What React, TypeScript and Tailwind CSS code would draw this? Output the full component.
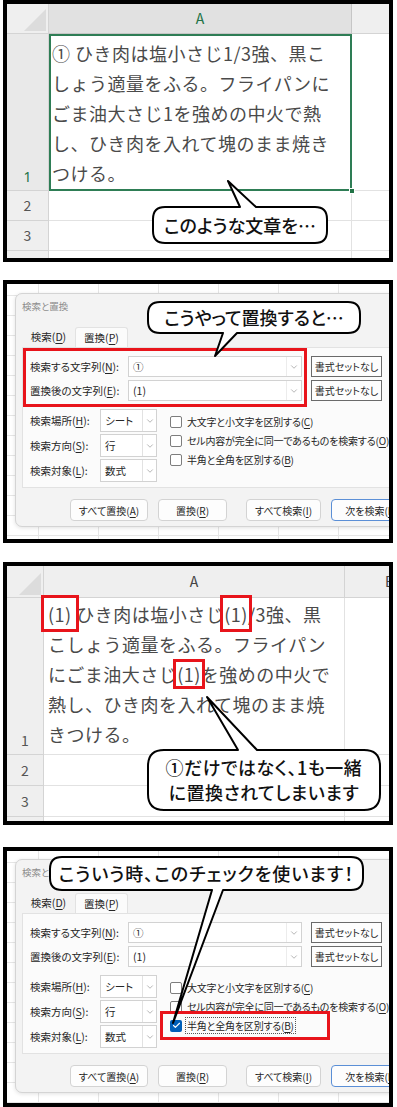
import React from "react";
import { Check, ChevronDown } from "lucide-react";

const JP = "font-['Noto_Sans_CJK_JP','Noto_Sans',sans-serif]";
const PALT = "[font-feature-settings:'palt']";

type Tail = { side: "top" | "bottom"; b1: number; b2: number; tx: number; ty: number };

// rounded box with a pointed tail, drawn in panel coordinates
function bubblePath(x: number, y: number, w: number, h: number, r: number, t: Tail) {
  const R = x + w;
  const B = y + h;
  if (t.side === "top") {
    return `M ${x + r} ${y} L ${t.b1} ${y} L ${t.tx} ${t.ty} L ${t.b2} ${y} L ${R - r} ${y} Q ${R} ${y} ${R} ${y + r} L ${R} ${B - r} Q ${R} ${B} ${R - r} ${B} L ${x + r} ${B} Q ${x} ${B} ${x} ${B - r} L ${x} ${y + r} Q ${x} ${y} ${x + r} ${y} Z`;
  }
  return `M ${x + r} ${y} L ${R - r} ${y} Q ${R} ${y} ${R} ${y + r} L ${R} ${B - r} Q ${R} ${B} ${R - r} ${B} L ${t.b2} ${B} L ${t.tx} ${t.ty} L ${t.b1} ${B} L ${x + r} ${B} Q ${x} ${B} ${x} ${B - r} L ${x} ${y + r} Q ${x} ${y} ${x + r} ${y} Z`;
}

const Callout = ({
  box,
  tail,
  className,
  children,
}: {
  box: [number, number, number, number, number];
  tail: Tail;
  className: string;
  children: React.ReactNode;
}) => {
  const [x, y, w, h, r] = box;
  return (
    <>
      <svg className="pointer-events-none absolute left-0 top-0 h-[256px] w-[382px] overflow-visible">
        <path d={bubblePath(x, y, w, h, r, tail)} fill="white" stroke="black" strokeWidth={2} strokeLinejoin="round" />
      </svg>
      <div
        className={`absolute flex flex-col items-center justify-center whitespace-nowrap font-medium leading-[25px] text-[#111] ${JP} ${PALT} ${className}`}
      >
        {children}
      </div>
    </>
  );
};

const Frame = ({ className, children }: { className: string; children: React.ReactNode }) => (
  <div className={`relative ml-[3px] w-[390px] overflow-hidden border-4 border-black bg-white ${className}`}>{children}</div>
);

const Corner = ({ w }: { w: string }) => (
  <div className={`relative h-full shrink-0 border-r border-b border-[#d4d4d4] bg-[#efefef] ${w}`}>
    <div className="absolute bottom-[2px] right-[2px] h-0 w-0 border-b-[22px] border-l-[22px] border-b-[#dcdcdc] border-l-transparent" />
  </div>
);

const Underline = ({ c }: { c: string }) => <span className="underline underline-offset-2">{c}</span>;

/* ---------- sheet 1 ---------- */
const lines1 = [
  "① ひき肉は塩小さじ1/3強、黒こ",
  "しょう適量をふる。フライパンに",
  "ごま油大さじ1を強めの中火で熱",
  "し、ひき肉を入れて塊のまま焼き",
  "つける。",
];

const SheetOne = () => (
  <Frame className="h-[262px]">
    <div className={`flex h-[30px] ${JP}`}>
      <Corner w="w-[42px]" />
      <div className="flex w-[303px] shrink-0 items-center justify-center border-r border-b border-[#c6c6c6] bg-[#e1e1e1] text-[14px] text-[#217346]">
        A
      </div>
      <div className="flex-1 border-b border-[#d4d4d4] bg-[#efefef]" />
    </div>
    <div className="flex h-[157px]">
      <div className="flex w-[42px] shrink-0 items-end justify-center border-r border-b border-[#d4d4d4] bg-[#e9e9e9] pb-[3px] text-[14px] text-[#217346]">
        1
      </div>
      <div className="relative w-[303px] shrink-0 pl-[3px] pt-[4px]">
        <div className={`text-[18px] leading-[30px] tracking-[0.5px] text-[#4a4a4a] ${JP}`}>
          {lines1.map((l) => (
            <div key={l} className="whitespace-nowrap">
              {l}
            </div>
          ))}
        </div>
        <div className="absolute inset-0 border-2 border-[#2e7d55]" />
        <div className="absolute -bottom-[3px] -right-[3px] h-[6px] w-[6px] border border-white bg-[#217346]" />
      </div>
      <div className="flex-1 border-b border-[#e2e2e2]" />
    </div>
    {["2", "3", ""].map((n) => (
      <div key={n} className="flex h-[30px]">
        <div className={`flex w-[42px] shrink-0 items-center justify-center border-r border-b border-[#d4d4d4] bg-[#efefef] text-[14px] text-[#555] ${JP}`}>
          {n}
        </div>
        <div className="w-[303px] shrink-0 border-r border-b border-[#e2e2e2]" />
        <div className="flex-1 border-b border-[#e2e2e2]" />
      </div>
    ))}
    <Callout
      box={[146, 203, 174, 36, 12]}
      tail={{ side: "top", b1: 233, b2: 249, tx: 221, ty: 177 }}
      className="left-[146px] top-[203px] h-[36px] w-[174px] text-[18px]"
    >
      このような文章を…
    </Callout>
  </Frame>
);

/* ---------- sheet 3 ---------- */
const Mark = ({ box }: { box: string }) => (
  <span className="relative">
    (1)
    <span className={`absolute border-[3px] border-[#e8141b] ${box}`} />
  </span>
);

const SheetThree = () => (
  <Frame className="mt-[19px] h-[263px]">
    <div className={`flex h-[32px] ${JP}`}>
      <Corner w="w-[37px]" />
      <div className="flex w-[301px] shrink-0 items-center justify-center border-r border-b border-[#d4d4d4] bg-[#efefef] text-[14px] text-[#444]">
        A
      </div>
      <div className="flex min-w-0 flex-1 items-center overflow-hidden border-b border-[#d4d4d4] bg-[#efefef] pl-[40px] text-[14px] text-[#444]">
        B
      </div>
    </div>
    <div className="flex h-[157px]">
      <div className={`flex w-[37px] shrink-0 items-end justify-center border-r border-b border-[#d4d4d4] bg-[#efefef] pb-[3px] text-[14px] text-[#555] ${JP}`}>
        1
      </div>
      <div className="w-[301px] shrink-0 border-r border-b border-[#e2e2e2] pl-[4px] pt-[1px]">
        <div className={`whitespace-nowrap text-[18px] leading-[30px] tracking-[0.5px] text-[#4a4a4a] ${JP}`}>
          <div>
            <Mark box="-left-[7px] -right-[7px] -top-[6px] -bottom-[5px]" /> ひき肉は塩小さじ
            <Mark box="-left-[4px] -right-[4px] -top-[6px] -bottom-[5px]" />
            /3強、黒
          </div>
          <div>こしょう適量をふる。フライパン</div>
          <div>
            にごま油大さじ
            <Mark box="-left-[4px] -right-[4px] -top-[2px] -bottom-[2px]" />
            を強めの中火で
          </div>
          <div>熱し、ひき肉を入れて塊のまま焼</div>
          <div>きつける。</div>
        </div>
      </div>
      <div className="flex-1 border-b border-[#e2e2e2]" />
    </div>
    {["2", "3", ""].map((n) => (
      <div key={n} className="flex h-[31px]">
        <div className={`flex w-[37px] shrink-0 items-center justify-center border-r border-b border-[#d4d4d4] bg-[#efefef] text-[14px] text-[#555] ${JP}`}>
          {n}
        </div>
        <div className="w-[301px] shrink-0 border-r border-b border-[#e2e2e2]" />
        <div className="flex-1 border-b border-[#e2e2e2]" />
      </div>
    ))}
    <Callout
      box={[141, 184, 232, 60, 16]}
      tail={{ side: "top", b1: 231, b2: 250, tx: 200, ty: 131 }}
      className="left-[141px] top-[184px] h-[60px] w-[232px] text-[18px] tracking-[0.5px]"
    >
      <div>①だけではなく、1も一緒</div>
      <div>に置換されてしまいます</div>
    </Callout>
  </Frame>
);

/* ---------- dialog ---------- */
const Chevron = () => <ChevronDown className="h-[10px] w-[10px] text-[#8a8a8a]" strokeWidth={1.5} />;

const Field = ({ label, value }: { label: React.ReactNode; value: string }) => (
  <div className="flex items-center">
    <div className="w-[98px] text-[10.5px]">{label}</div>
    <div className="flex h-[21px] w-[174px] items-center border border-[#d2d2d2] bg-white">
      <div className="flex-1 pl-[4px] text-[10.5px]">{value}</div>
      <div className="flex h-full w-[15px] items-center justify-center border-l border-[#ececec]">
        <Chevron />
      </div>
    </div>
  </div>
);

const FormatBtn = () => (
  <div className="flex h-[21px] w-[71px] items-center justify-center border border-[#6a6a6a] bg-[#fdfdfd]">
    書式セットなし
  </div>
);

const Select = ({ label, value }: { label: React.ReactNode; value: string }) => (
  <div className="flex items-center">
    <div className="w-[70px] text-[10.5px]">{label}</div>
    <div className="flex h-[23px] w-[57px] items-center border border-[#d2d2d2] bg-white">
      <div className="flex-1 pl-[4px] text-[10.5px]">{value}</div>
      <div className="flex h-full w-[14px] items-center justify-center border-l border-[#e2e2e2]">
        <Chevron />
      </div>
    </div>
  </div>
);

const Box = ({ checked }: { checked?: boolean }) =>
  checked ? (
    <div className="flex h-[12px] w-[12px] shrink-0 items-center justify-center rounded-[2px] bg-[#005fb8]">
      <Check className="h-[9px] w-[9px] text-white" strokeWidth={3} />
    </div>
  ) : (
    <div className="h-[12px] w-[12px] shrink-0 rounded-[2px] border border-[#7d7d7d] bg-white" />
  );

const Btn = ({ w, children, blue }: { w: string; children: React.ReactNode; blue?: boolean }) => (
  <div
    className={`flex h-[22px] shrink-0 items-center justify-center rounded-[4px] border bg-[#fdfdfd] ${w} ${
      blue ? "border-[#5b8fd6]" : "border-[#d3d3d3]"
    }`}
  >
    {children}
  </div>
);

const Dialog = ({ step }: { step: "inputs" | "check" }) => (
  <div
    className={`h-[234px] w-[400px] whitespace-nowrap rounded-[7px] border border-[#d4d4d4] bg-[#f3f3f3] text-[10px] text-[#262626] shadow-[0_1px_4px_rgba(0,0,0,0.12)] ${JP} ${PALT}`}
  >
    <div className="h-[33px] pl-[6px] pt-[5px] text-[9.5px] text-[#8c8c8c]">検索と置換</div>
    <div className="ml-[6px] flex h-[20px] text-[10.5px]">
      <div className="flex w-[53px] items-center justify-center">
        検索(<Underline c="D" />)
      </div>
      <div className="flex w-[53px] items-center justify-center rounded-t-[3px] border border-b-0 border-[#e2e2e2] bg-[#fbfbfb]">
        置換(<Underline c="P" />)
      </div>
    </div>
    <div className="ml-[6px] h-[141px] border border-[#e2e2e2] bg-[#fbfbfb]">
      <div className="flex">
        <div
          className={`flex h-[59px] w-[284px] flex-col gap-[3px] border-[3px] pl-[4px] pt-[5px] ${
            step === "inputs" ? "border-[#e8141b]" : "border-transparent"
          }`}
        >
          <Field
            label={
              <>
                検索する文字列(<Underline c="N" />):
              </>
            }
            value="①"
          />
          <Field
            label={
              <>
                置換後の文字列(<Underline c="E" />):
              </>
            }
            value="(1)"
          />
        </div>
        <div className="ml-[4px] flex flex-col gap-[3px] pt-[8px]">
          <FormatBtn />
          <FormatBtn />
        </div>
      </div>
      <div className="flex">
        <div className="flex flex-col gap-[2px] pl-[7px] pt-[2px]">
          <Select
            label={
              <>
                検索場所(<Underline c="H" />):
              </>
            }
            value="シート"
          />
          <Select
            label={
              <>
                検索方向(<Underline c="S" />):
              </>
            }
            value="行"
          />
          <Select
            label={
              <>
                検索対象(<Underline c="L" />):
              </>
            }
            value="数式"
          />
        </div>
        <div className="ml-[13px] flex flex-col pt-[5px] tracking-[-0.2px]">
          <div className="flex h-[19px] items-center gap-[5px]">
            <Box />
            <span>
              大文字と小文字を区別する(<Underline c="C" />)
            </span>
          </div>
          <div className="flex h-[19px] items-center gap-[5px]">
            <Box />
            <span>
              セル内容が完全に同一であるものを検索する(<Underline c="O" />)
            </span>
          </div>
          <div className="relative flex h-[19px] items-center gap-[3px]">
            <Box checked={step === "check"} />
            <span className={step === "check" ? "border border-dotted border-[#555] px-[1px]" : "pl-[2px]"}>
              半角と全角を区別する(<Underline c="B" />)
            </span>
            {step === "check" && <div className="absolute -left-[10px] -top-[5px] h-[29px] w-[170px] border-[3px] border-[#e8141b]" />}
          </div>
        </div>
      </div>
    </div>
    <div className="ml-[54px] mt-[11px] flex">
      <Btn w="w-[78px]">
        すべて置換(<Underline c="A" />)
      </Btn>
      <Btn w="ml-[10px] w-[69px]">
        置換(<Underline c="R" />)
      </Btn>
      <Btn w="ml-[19px] w-[75px]">
        すべて検索(<Underline c="I" />)
      </Btn>
      <Btn w="ml-[10px] w-[80px]" blue>
        次を検索(<Underline c="F" />)
      </Btn>
    </div>
  </div>
);

const GRID =
  "bg-[linear-gradient(to_right,#e6e6e6_1px,transparent_1px),linear-gradient(to_bottom,#e6e6e6_1px,transparent_1px)] [background-size:60px_20px] [background-position:31px_11px]";

const DialogPanel = ({ step }: { step: "inputs" | "check" }) =>
  step === "inputs" ? (
    <Frame className="mt-[18px] h-[263px]">
      <div className={`h-full pl-[8px] pt-[9px] ${GRID}`}>
        <Dialog step="inputs" />
      </div>
      <Callout
        box={[141, 18, 212, 31, 12]}
        tail={{ side: "bottom", b1: 216, b2: 230, tx: 208, ty: 72 }}
        className="left-[141px] top-[18px] h-[31px] w-[212px] text-[18px]"
      >
        こうやって置換すると…
      </Callout>
    </Frame>
  ) : (
    <Frame className="mt-[22px] h-[260px]">
      <div className={`h-full pl-[8px] pt-[8px] ${GRID}`}>
        <Dialog step="check" />
      </div>
      <Callout
        box={[43, 6, 313, 33, 12]}
        tail={{ side: "bottom", b1: 205, b2: 216, tx: 166, ty: 172 }}
        className="left-[43px] top-[6px] h-[33px] w-[313px] text-[18px] tracking-[1px]"
      >
        こういう時、このチェックを使います！
      </Callout>
    </Frame>
  );

const App = () => {
  return (
    <div className="h-[1107px] w-[397px] overflow-hidden bg-white">
      <SheetOne />
      <DialogPanel step="inputs" />
      <SheetThree />
      <DialogPanel step="check" />
    </div>
  );
};

export default App;
